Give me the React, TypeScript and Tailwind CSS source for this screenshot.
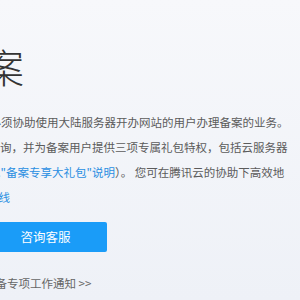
import React from 'react';

const cjk = { fontFamily: '"Noto Sans CJK SC", "Noto Sans", sans-serif' };

const App = () => {
  return (
    <div
      className="w-[300px] h-[300px] overflow-hidden bg-gradient-to-b from-[#f7f8fb] to-[#eef1f7]"
      style={cjk}
    >
      <div className="flex flex-col">
        <h1 className="mt-[46px] ml-[-56px] whitespace-nowrap text-[40px] leading-[40px] font-light text-[#333]">
          备案
        </h1>

        <div className="mt-[24px] text-[11.5px] leading-[25px] text-[#5b5b5b] whitespace-nowrap">
          <p className="ml-[-22px]">，必须协助使用大陆服务器开办网站的用户办理备案的业务。</p>
          <p className="ml-[-23px]">和咨询，并为备案用户提供三项专属礼包特权，包括云服务器</p>
          <p className="ml-[-22.5px]">
            详见<span className="text-[#2a8fe2]">"备案专享大礼包"说明</span>）。 您可在腾讯云的协助下高效地
          </p>
          <p className="ml-[-13px] text-[#2a8fe2]">热线</p>
        </div>

        <button className="mt-[12px] ml-[-16px] w-[123px] h-[30px] bg-[#1a9cf8] text-white text-[12.5px] rounded-[2px]">
          咨询客服
        </button>

        <p className="mt-[25px] ml-[-4.5px] whitespace-nowrap text-[11.5px] leading-[12px] text-[#666]">
          备专项工作通知 &gt;&gt;
        </p>
      </div>
    </div>
  );
};

export default App;
